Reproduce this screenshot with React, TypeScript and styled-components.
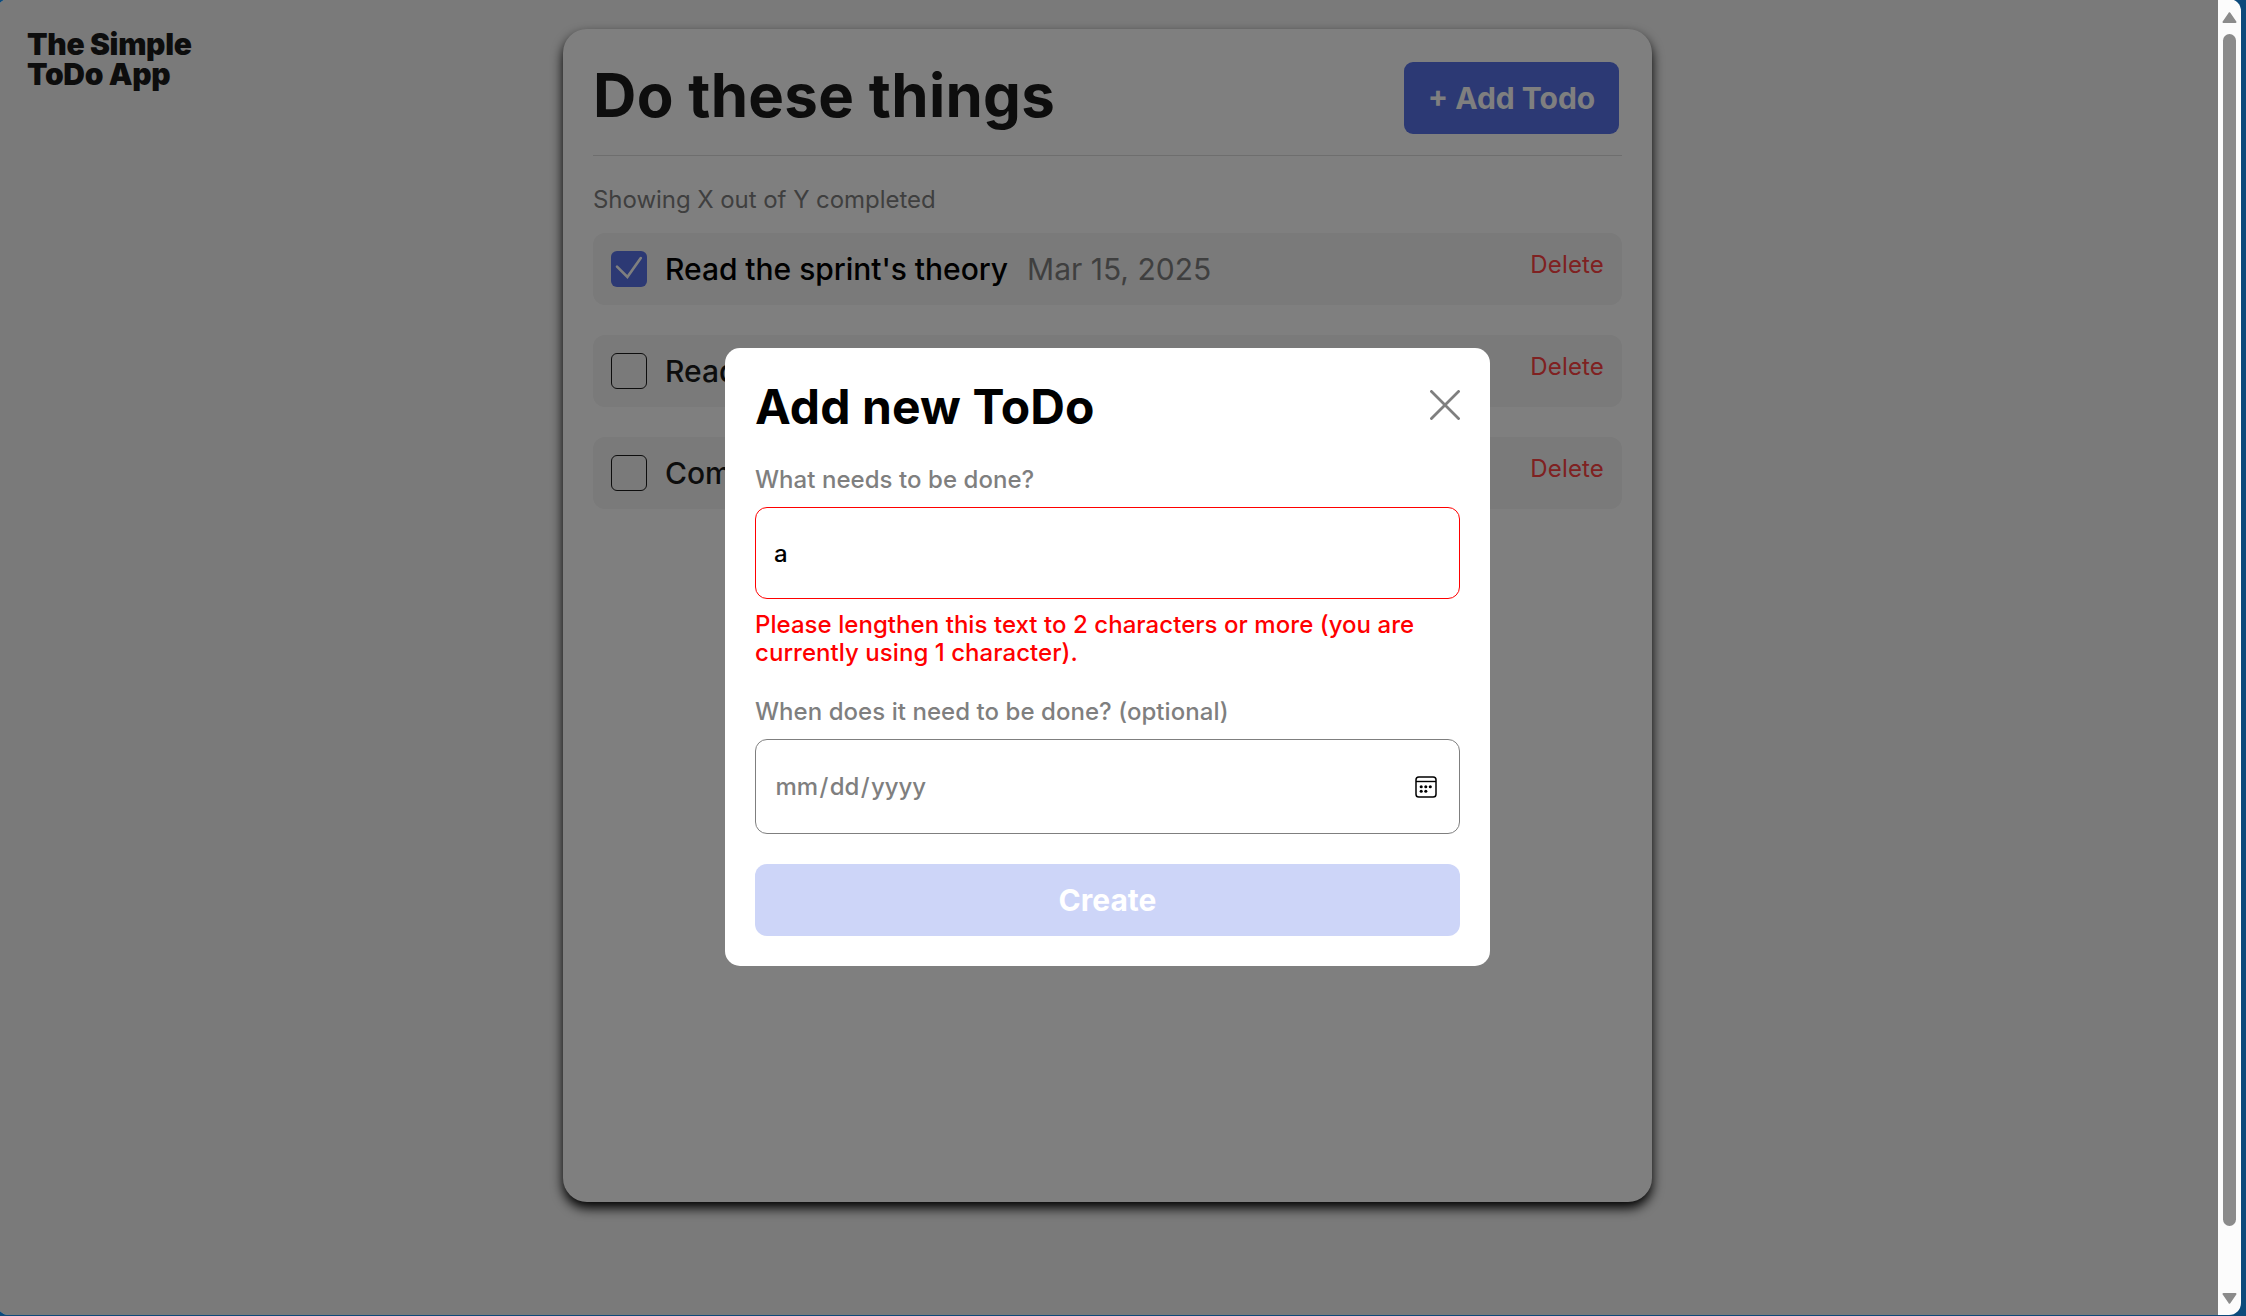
import React from "react";
import styled, { createGlobalStyle } from "styled-components";

const GlobalStyle = createGlobalStyle`
  *, *::before, *::after { box-sizing: border-box; }
  html, body { margin: 0; padding: 0; overflow: hidden; }
  body {
    background: #0d4a7b;
    font-family: Inter, "Liberation Sans", sans-serif;
    color: #1a1a1a;
  }
  h1, h2, p, ul { margin: 0; padding: 0; }
  button, input { font-family: inherit; }
`;

const Desktop = styled.div`
  width: 2246px;
  height: 1316px;
  overflow: hidden;
  background: #0d4a7b;
`;

const Window = styled.div`
  display: flex;
  width: 2244px;
  height: 1316px;
  margin: -1px 0 0 -3px;
  border-radius: 12px;
  overflow: hidden;
`;

const Viewport = styled.div`
  position: relative;
  flex: 1;
  height: 100%;
  background: #f4f4f4;
  display: grid;
  grid-template-columns: 1fr 1089px 1fr;
  align-items: start;
  padding-top: 30px;
`;

const Logo = styled.div`
  padding-left: 30px;
  font-size: 30px;
  line-height: 30px;
  font-weight: 900;
  letter-spacing: -0.33px;
`;

const Card = styled.main`
  height: 1173px;
  padding: 30px;
  background: #fff;
  border-radius: 24px;
  box-shadow: 0 6px 12px #000;
`;

const Header = styled.header`
  display: flex;
  justify-content: space-between;
  align-items: flex-start;
  height: 97px;
  border-bottom: 1px solid #dcdcdc;
`;

const Heading = styled.h1`
  font-size: 60px;
  line-height: 73px;
  font-weight: 700;
  letter-spacing: 0.3px;
`;

const AddButton = styled.button`
  width: 215px;
  height: 72px;
  margin: 3px;
  padding: 0;
  border: 0;
  border-radius: 9px;
  background: #5872e8;
  color: #fff;
  font-size: 30px;
  font-weight: 700;
  white-space: nowrap;
`;

const Counter = styled.p`
  margin-top: 29px;
  font-size: 24px;
  line-height: 29px;
  letter-spacing: -0.05px;
  color: #7f7f7f;
`;

const List = styled.ul`
  display: flex;
  flex-direction: column;
  gap: 30px;
  margin-top: 19px;
  list-style: none;
`;

const Item = styled.li`
  display: flex;
  align-items: flex-start;
  gap: 18px;
  height: 72px;
  padding: 18px;
  border-radius: 12px;
  background: #f4f4f4;
`;

const Checkbox = styled.span<{ $checked?: boolean }>`
  flex: none;
  display: flex;
  width: 36px;
  height: 36px;
  border-radius: 6px;
  border: ${(p) => (p.$checked ? "0" : "1px solid #1a1a1a")};
  background: ${(p) => (p.$checked ? "#5872e8" : "transparent")};
`;

const Name = styled.span<{ $done?: boolean }>`
  font-size: 30px;
  line-height: 36px;
  font-weight: 500;
  letter-spacing: -0.03px;
  white-space: nowrap;
  color: ${(p) => (p.$done ? "#000" : "#1a1a1a")};
`;

const DateText = styled.span`
  margin-left: 1px;
  font-size: 30px;
  line-height: 36px;
  color: #7f7f7f;
`;

const Delete = styled.button`
  margin: -1px 0 0 auto;
  padding: 0;
  border: 0;
  background: none;
  font-size: 24px;
  line-height: 29px;
  letter-spacing: 0.15px;
  color: #ff4242;
`;

const Overlay = styled.div`
  position: absolute;
  inset: 0;
  display: flex;
  align-items: center;
  justify-content: center;
  background: rgba(0, 0, 0, 0.5);
`;

const Modal = styled.form`
  width: 765px;
  height: 618px;
  padding: 30px;
  border-radius: 15px;
  background: #fff;
  display: flex;
  flex-direction: column;
`;

const ModalHeader = styled.div`
  display: flex;
  justify-content: space-between;
  height: 58px;
`;

const ModalTitle = styled.h2`
  font-size: 48px;
  line-height: 58px;
  font-weight: 700;
  letter-spacing: 0.1px;
  color: #000;
`;

const Close = styled.svg`
  width: 30px;
  height: 30px;
  margin-top: 12px;
`;

const Label = styled.label<{ $top: number }>`
  margin-top: ${(p) => p.$top}px;
  font-size: 24px;
  line-height: 29px;
  font-weight: 500;
  letter-spacing: 0.05px;
  color: #7f7f7f;
`;

const Field = styled.div<{ $error?: boolean }>`
  display: flex;
  align-items: center;
  justify-content: space-between;
  flex: none;
  height: ${(p) => (p.$error ? 92 : 95)}px;
  margin-top: 13px;
  padding: 0 22px 0 18px;
  border: 1px solid ${(p) => (p.$error ? "#f00" : "#7f7f7f")};
  border-radius: 12px;
  font-size: 24px;
  font-weight: 500;
  color: ${(p) => (p.$error ? "#000" : "#7f7f7f")};
`;

const Segments = styled.span`
  display: flex;
  letter-spacing: -0.08px;
  span { padding: 0 1.5px; }
`;

const ErrorText = styled.p`
  margin-top: 12px;
  font-size: 24px;
  line-height: 28px;
  font-weight: 500;
  letter-spacing: 0.05px;
  color: #f00;
`;

const Create = styled.button`
  flex: none;
  height: 72px;
  margin-top: 30px;
  padding: 0;
  border: 0;
  border-radius: 12px;
  background: #cdd5f8;
  color: #fff;
  font-size: 30px;
  font-weight: 700;
`;

const Scrollbar = styled.div`
  width: 23px;
  height: 100%;
  padding: 13px 0 11px;
  background: #fcfcfc;
  display: flex;
  flex-direction: column;
  align-items: center;
`;

const Thumb = styled.div`
  width: 13px;
  height: 1192px;
  margin: 11px 0 auto;
  border-radius: 7px;
  background: #8b8b8b;
`;

const Arrow = ({ down }: { down?: boolean }) => (
  <svg width="15" height="11" viewBox="0 0 15 11">
    <path
      d={down ? "M1.5 1h12L7.5 9.8z" : "M1.5 10h12L7.5 1.2z"}
      fill="#8b8b8b"
      stroke="#8b8b8b"
      strokeWidth="2"
      strokeLinejoin="round"
    />
  </svg>
);

const Check = () => (
  <svg width="36" height="36" viewBox="0 0 36 36" fill="none">
    <path d="M6 15.6L16.4 26L29.8 7" stroke="#fff" strokeWidth="2.6" strokeLinecap="round" />
  </svg>
);

const Calendar = () => (
  <svg width="22" height="22" viewBox="0 0 22 22" fill="none">
    <rect x="1" y="1" width="20" height="20" rx="2.8" stroke="#000" strokeWidth="1.5" />
    <path d="M1 5.5h20" stroke="#000" strokeWidth="1.4" />
    {[[6.2, 10.8], [10.8, 10.8], [15.3, 10.8], [6.2, 15.2], [10.8, 15.2]].map(([x, y]) => (
      <circle key={`${x}-${y}`} cx={x} cy={y} r="1.55" fill="#000" />
    ))}
  </svg>
);

const todos = [
  { name: "Read the sprint's theory", date: "Mar 15, 2025", done: true },
  { name: "Read project description", date: "", done: false },
  { name: "Complete project", date: "", done: false },
];

export default function App() {
  return (
    <Desktop>
      <GlobalStyle />
      <Window>
        <Viewport>
          <Logo>
            The Simple
            <br />
            ToDo App
          </Logo>
          <Card>
            <Header>
              <Heading>Do these things</Heading>
              <AddButton>+ Add Todo</AddButton>
            </Header>
            <Counter>Showing X out of Y completed</Counter>
            <List>
              {todos.map((t) => (
                <Item key={t.name}>
                  <Checkbox $checked={t.done}>{t.done && <Check />}</Checkbox>
                  <Name $done={t.done}>{t.name}</Name>
                  {t.date && <DateText>{t.date}</DateText>}
                  <Delete>Delete</Delete>
                </Item>
              ))}
            </List>
          </Card>
          <Overlay>
            <Modal>
              <ModalHeader>
                <ModalTitle>Add new ToDo</ModalTitle>
                <Close viewBox="0 0 30 30">
                  <path d="M0.5 0.5L29.5 29.5M29.5 0.5L0.5 29.5" stroke="#7f7f7f" strokeWidth="2.8" />
                </Close>
              </ModalHeader>
              <Label $top={29}>What needs to be done?</Label>
              <Field $error>a</Field>
              <ErrorText>
                Please lengthen this text to 2 characters or more (you are currently using 1 character).
              </ErrorText>
              <Label $top={30}>When does it need to be done? (optional)</Label>
              <Field>
                <Segments>
                  <span>mm</span>/<span>dd</span>/<span>yyyy</span>
                </Segments>
                <Calendar />
              </Field>
              <Create type="button">Create</Create>
            </Modal>
          </Overlay>
        </Viewport>
        <Scrollbar>
          <Arrow />
          <Thumb />
          <Arrow down />
        </Scrollbar>
      </Window>
    </Desktop>
  );
}
